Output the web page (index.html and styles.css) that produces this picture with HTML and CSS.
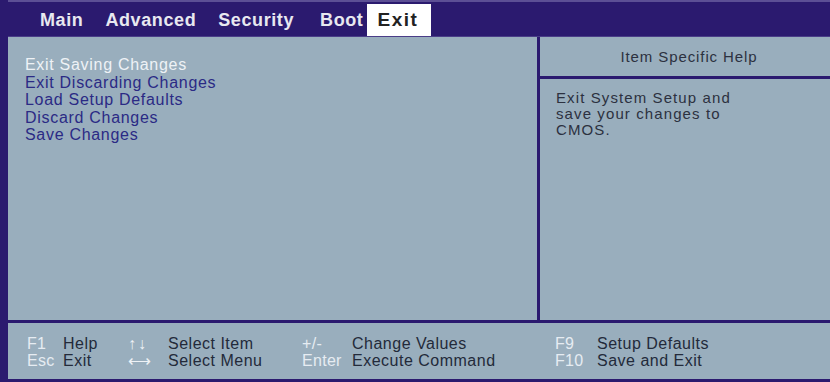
FILE: index.html
```html
<!DOCTYPE html>
<html>
<head>
<meta charset="utf-8">
<link rel="stylesheet" href="styles.css">
</head>
<body>
<div class="screen">
  <div class="menubar">
    <span class="tab">Main</span>
    <span class="tab">Advanced</span>
    <span class="tab">Security</span>
    <span class="tab boot">Boot</span>
    <span class="tab active">Exit</span>
  </div>
  <div class="main">
    <div class="items">
      <div class="item sel">Exit Saving Changes</div>
      <div class="item">Exit Discarding Changes</div>
      <div class="item">Load Setup Defaults</div>
      <div class="item">Discard Changes</div>
      <div class="item">Save Changes</div>
    </div>
    <div class="help">
      <div class="help-head">Item Specific Help</div>
      <div class="help-body">Exit System Setup and<br>save your changes to<br>CMOS.</div>
    </div>
  </div>
  <div class="footer">
    <div class="col c1">
      <div><span class="key">F1</span>Help</div>
      <div><span class="key">Esc</span>Exit</div>
    </div>
    <div class="col c2">
      <div><span class="key arrow">↑↓</span>Select Item</div>
      <div><span class="key arrow">⟷</span>Select Menu</div>
    </div>
    <div class="col c3">
      <div><span class="key">+/-</span>Change Values</div>
      <div><span class="key">Enter</span>Execute Command</div>
    </div>
    <div class="col c4">
      <div><span class="key">F9</span>Setup Defaults</div>
      <div><span class="key">F10</span>Save and Exit</div>
    </div>
  </div>
</div>
</body>
</html>
```
FILE: styles.css
```css
html, body {
  margin: 0;
  padding: 0;
  background: #99aebd;
}
.screen {
  width: 830px;
  height: 382px;
  box-sizing: border-box;
  border-left: 8px solid #2b1a6f;
  border-bottom: 3px solid #2b1a6f;
  background: #99aebd;
  display: flex;
  flex-direction: column;
  font-family: "Liberation Sans", Arial, sans-serif;
  overflow: hidden;
}
.menubar {
  height: 37px;
  box-sizing: border-box;
  background: #2b1a6f;
  border-top: 2px solid #5c4f95;
  border-bottom: 1px solid #4a3d88;
  display: flex;
  align-items: flex-end;
  padding-left: 21px;
  flex-shrink: 0;
}
.tab {
  color: #e8e8f0;
  font-weight: bold;
  font-size: 18px;
  line-height: 32px;
  height: 32px;
  padding: 0 11px;
  letter-spacing: 0.6px;
}
.tab.boot {
  padding: 0 4px 0 15px;
}
.tab.active {
  background: #ffffff;
  color: #222;
  font-size: 19px;
  padding: 0 13px 0 10px;
  letter-spacing: 1.5px;
}
.main {
  display: flex;
  height: 283px;
  flex-shrink: 0;
  border-bottom: 3px solid #2b1a6f;
}
.items {
  width: 532px;
  padding: 19px 0 0 17px;
  box-sizing: border-box;
  border-right: 3px solid #2b1a6f;
  font-size: 16px;
  line-height: 17.5px;
  letter-spacing: 0.7px;
  color: #2b2a85;
}
.item.sel {
  color: #eef2f6;
}
.help {
  flex: 1;
  display: flex;
  flex-direction: column;
}
.help-head {
  height: 42px;
  box-sizing: border-box;
  border-bottom: 3px solid #2b1a6f;
  text-align: center;
  font-size: 15px;
  letter-spacing: 0.9px;
  line-height: 40px;
  color: #2c3140;
  padding-left: 8px;
}
.help-body {
  padding: 11px 0 0 16px;
  font-size: 15px;
  line-height: 16px;
  letter-spacing: 1.1px;
  color: #2c3140;
}
.footer {
  flex: 1;
  display: flex;
  padding: 12px 0 0 19px;
  font-size: 16px;
  line-height: 17px;
  letter-spacing: 0.5px;
  color: #232a3a;
}
.col div {
  white-space: nowrap;
}
.key {
  display: inline-block;
  color: #e6ecf2;
  letter-spacing: 0.3px;
}
.key.arrow {
  color: #eef2f6;
  letter-spacing: 2px;
}
.c1 { width: 101px; }
.c1 .key { width: 36px; }
.c2 { width: 174px; }
.c2 .key { width: 40px; }
.c3 { width: 253px; }
.c3 .key { width: 50px; }
.c4 .key { width: 42px; }
```
